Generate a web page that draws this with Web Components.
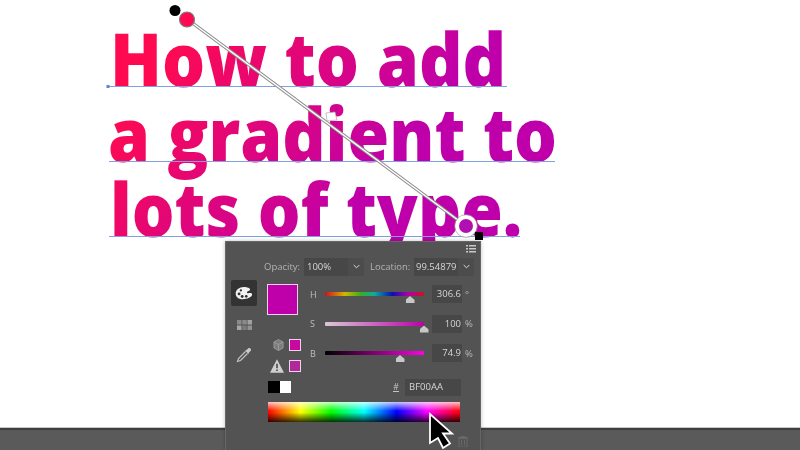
<!DOCTYPE html>
<html>
<head>
<meta charset="utf-8">
<style>
  html, body { margin: 0; height: 100%; background: #fff; overflow: hidden; }
  body { font-family: "Open Sans", "Liberation Sans", sans-serif; }
</style>
</head>
<body>
<art-board>
  <type-block>
    <type-line width="398" scale=".917" shift="0">How to add</type-line>
    <type-line width="446" scale=".912" shift="-2">a gradient to</type-line>
    <type-line width="411" scale=".909" shift="0">lots of type.</type-line>
  </type-block>
  <grad-handle slot="over"></grad-handle>
  <color-panel slot="over"></color-panel>
  <mouse-arrow slot="over"></mouse-arrow>
</art-board>

<script>
customElements.define(
  "art-board",
  class extends HTMLElement {
    constructor() {
      super();
      const shadowRoot = this.attachShadow({ mode: "open" });
      shadowRoot.innerHTML = `
<style>
  :host {
    display: flex;
    flex-direction: column;
    position: relative;
    width: 800px;
    height: 450px;
    overflow: hidden;
  }
  .page { flex: 1; }
  .bar {
    height: 20px;
    background: #5b5a5b;
    border-top: 2px solid #3f3f3f;
    box-shadow: 0 -1px 0 #c8c8c8;
  }
</style>
<div class="page"><slot></slot></div>
<div class="bar"></div>
<slot name="over"></slot>
`;
    }
  }
);

customElements.define(
  "type-block",
  class extends HTMLElement {
    constructor() {
      super();
      const shadowRoot = this.attachShadow({ mode: "open" });
      shadowRoot.innerHTML = `
<style>
  :host {
    display: flex;
    flex-direction: column;
    padding: 21px 0 0 110px;
    font-size: 74px;
    font-weight: 800;
    line-height: 75px;
  }
</style>
<slot></slot>
`;
    }
  }
);

// each line paints the same gradient, so shift it back by the line's place.
// the ink is squeezed in x, so the gradient box is stretched to make up for it
customElements.define(
  "type-line",
  class extends HTMLElement {
    constructor() {
      super();
      const shadowRoot = this.attachShadow({ mode: "open" });
      shadowRoot.innerHTML = `
<style>
  :host {
    display: block;
    position: relative;
    height: 75px;
  }
  .ink {
    display: block;
    white-space: nowrap;
    width: 540px;
    height: 95px;
    color: transparent;
    background-image: linear-gradient(129.9deg, #ff0a50 17.7%, #bf00aa 45%);
    background-repeat: no-repeat;
    -webkit-background-clip: text;
    background-clip: text;
    transform-origin: 0 0;
  }
  .rule {
    position: absolute;
    left: -1px;
    top: 65px;
    height: 1px;
    background: #829fe0;
  }
</style>
<span class="ink"><slot></slot></span>
<div class="rule"></div>
`;
    }

    connectedCallback() {
      const index = [...this.parentNode.children].indexOf(this);
      const scale = parseFloat(this.getAttribute("scale"));
      const shift = parseFloat(this.getAttribute("shift"));
      const ink = this.shadowRoot.querySelector(".ink");
      ink.style.transform = `translateX(${shift}px) scaleX(${scale})`;
      ink.style.backgroundSize = `${800 / scale}px 450px`;
      ink.style.backgroundPosition = `${-(110 + shift) / scale}px ${-21 - index * 75}px`;
      this.shadowRoot.querySelector(".rule").style.width =
        this.getAttribute("width") + "px";
    }
  }
);

customElements.define(
  "grad-handle",
  class extends HTMLElement {
    constructor() {
      super();
      const shadowRoot = this.attachShadow({ mode: "open" });
      shadowRoot.innerHTML = `
<style>
  :host {
    position: absolute;
    left: 0;
    top: 0;
    display: block;
  }
</style>
<svg width="800" height="450" viewBox="0 0 800 450">
  <path d="M187 19 466 226" stroke="#8c8c8c" stroke-width="3.4"/>
  <path d="M187 19 466 226" stroke="#fff" stroke-width="1.4"/>
  <rect x="106.500" y="85" width="3" height="3" fill="#5b86dc"/>
  <circle cx="175" cy="10.500" r="5.500" fill="#000"/>
  <circle cx="187" cy="19.500" r="7.500" fill="#ff0a50" stroke="#7c7c7c" stroke-width="1.200"/>
  <path d="M326 113 335 112 337 120 327 121Z" fill="#fff" stroke="#aaa" stroke-width=".7"/>
  <circle cx="466" cy="226" r="9" fill="#b010b0" stroke="#fff" stroke-width="4"/>
  <circle cx="466" cy="226" r="11.400" fill="none" stroke="#9a9a9a" stroke-width=".7"/>
  <rect x="475" y="232" width="8" height="8" fill="#000"/>
</svg>
`;
    }
  }
);

customElements.define(
  "hsb-row",
  class extends HTMLElement {
    constructor() {
      super();
      const shadowRoot = this.attachShadow({ mode: "open" });
      shadowRoot.innerHTML = `
<style>
  :host {
    display: grid;
    grid-template-columns: 14px 99px 38px auto;
    align-items: center;
    height: 18px;
    color: #d6d6d6;
  }
  .name { color: #bdbdbd; font-size: 9px; margin-left: -1px; }
  .track {
    position: relative;
    height: 4px;
    background: var(--track);
    border-radius: 1px;
  }
  .thumb {
    position: absolute;
    top: 4px;
    width: 9px;
    height: 7px;
    margin-left: -4.500px;
    background: #c8c8c8;
    clip-path: polygon(50% 0, 85% 40%, 100% 55%, 100% 100%, 0 100%, 0 55%, 15% 40%);
  }
  .value {
    box-sizing: border-box;
    width: 30px;
    height: 18px;
    margin-left: 8px;
    background: #474747;
    text-align: right;
    padding-right: 1px;
    line-height: 17px;
  }
  .unit { margin-left: 3px; color: #b9b9b9; }
</style>
<span class="name"></span>
<div class="track"><div class="thumb"></div></div>
<span class="value"></span>
<span class="unit"></span>
`;
    }

    connectedCallback() {
      const root = this.shadowRoot;
      root.querySelector(".name").textContent = this.getAttribute("name");
      root.querySelector(".value").textContent = this.getAttribute("value");
      root.querySelector(".unit").textContent = this.getAttribute("unit");
      root.querySelector(".track").style.setProperty("--track", this.getAttribute("track"));
      root.querySelector(".thumb").style.left = this.getAttribute("pos") + "px";
    }
  }
);

customElements.define(
  "color-panel",
  class extends HTMLElement {
    constructor() {
      super();
      const shadowRoot = this.attachShadow({ mode: "open" });
      shadowRoot.innerHTML = `
<style>
  :host {
    position: absolute;
    left: 225px;
    top: 241px;
    width: 256px;
    height: 209px;
    box-sizing: border-box;
    display: flex;
    flex-direction: column;
    background: #535353;
    border: 1px solid #666;
    border-bottom: 0;
    box-shadow: 0 0 4px #00000040;
    font-size: 9.500px;
    color: #d6d6d6;
    filter: blur(.3px);
  }
  .menu { display: flex; justify-content: flex-end; padding: 3px 4px 0 0; height: 10px; }
  .top {
    display: flex;
    align-items: center;
    height: 19px;
    margin-top: 2px;
    padding-left: 38px;
  }
  .top label { color: #b4b4b4; }
  .top .opacity-label { width: 36px; white-space: nowrap; }
  .top .location-label { width: 40px; margin-left: 6px; white-space: nowrap; }
  .field {
    display: flex;
    height: 18px;
    line-height: 17px;
    margin-left: 4px;
    box-sizing: border-box;
    white-space: nowrap;
  }
  .field span {
    display: block;
    box-sizing: border-box;
    padding-left: 3px;
    background: #474747;
    width: 44px;
  }
  .location span { padding-left: 2px; }
  .arrow {
    flex: none;
    width: 16px;
    height: 18px;
    background: #4c4c4c;
    display: flex;
    align-items: center;
    justify-content: center;
  }
  .body {
    flex: 1;
    display: flex;
    padding: 4px 0 0 5px;
  }
  .tools {
    width: 37px;
    flex: none;
    display: flex;
    flex-direction: column;
    align-items: flex-start;
  }
  .tool {
    width: 26px;
    height: 26px;
    display: flex;
    align-items: center;
    justify-content: center;
    border-radius: 2px;
  }
  .tool.on { background: #333; }
  .tool.grid { margin-top: 6px; }
  .tool.drop { margin-top: 4px; }
  .main { flex: 1; display: flex; flex-direction: column; }
  .upper { display: flex; height: 98px; }
  .side { width: 43px; flex: none; display: flex; flex-direction: column; }
  .big {
    width: 29px;
    height: 29px;
    margin: 4px 0 0 -1px;
    background: #bf00aa;
    border: 1px solid #ecd4e8;
  }
  .warn-row { display: flex; align-items: center; justify-content: flex-end; height: 21px; gap: 5px; width: 33px; }
  .warn-row svg { flex: none; }
  .warn-row.first { margin-top: 19px; }
  .mini {
    flex: none;
    width: 10px;
    height: 10px;
    border: 1px solid #ecd4e8;
    background: #c8089f;
  }
  .mini.web { background: #b0289a; }
  .rows {
    flex: 1;
    display: flex;
    flex-direction: column;
    gap: 11.500px;
    margin-top: 5px;
  }
  .hexline {
    display: flex;
    align-items: center;
    height: 18px;
  }
  .bw { display: flex; width: 23px; height: 12px; }
  .bw i { flex: 1; background: #000; }
  .bw i + i { background: #fff; }
  .hash { margin-left: 102px; width: 6px; color: #c4c4c4; border-bottom: 1px solid #c4c4c4; line-height: 9px; font-size: 8.500px; text-align: center; }
  .hex {
    margin-left: 6px;
    width: 56px;
    height: 17px;
    background: #474747;
    line-height: 16px;
    padding-left: 4px;
    box-sizing: border-box;
  }
  .spectrum {
    position: relative;
    width: 192px;
    height: 20px;
    margin-top: 6px;
    background: linear-gradient(90deg, #f00, #ff0 17%, #0f0 33%, #0ff 50%, #00f 67%, #f0f 83%, #f00);
  }
  .spectrum::after {
    content: "";
    position: absolute;
    inset: 0;
    background: linear-gradient(#ffffffc4 0%, #fff0 45%, #0000 52%, #000c 100%);
  }
  .trash { position: absolute; right: 12px; bottom: 3px; }
</style>
<div class="menu">
  <svg width="10" height="8" viewBox="0 0 10 8" fill="#c8c8c8"><path d="M0 0h2v1.500H0zM3 0h7v1.500H3zM0 3h2v1.500H0zM3 3h7v1.500H3zM0 6h2v1.500H0zM3 6h7v1.500H3z"/></svg>
</div>
<div class="top">
  <label class="opacity-label">Opacity:</label>
  <div class="field opacity"><span>100%</span><div class="arrow"><svg width="7" height="5" viewBox="0 0 7 5"><path d="M.7 1 3.500 3.800 6.300 1" fill="none" stroke="#ddd" stroke-width="1"/></svg></div></div>
  <label class="location-label">Location:</label>
  <div class="field location"><span>99.54879</span><div class="arrow"><svg width="7" height="5" viewBox="0 0 7 5"><path d="M.7 1 3.500 3.800 6.300 1" fill="none" stroke="#ddd" stroke-width="1"/></svg></div></div>
</div>
<div class="body">
  <div class="tools">
    <div class="tool on">
      <svg width="18" height="14" viewBox="0 0 20 16" preserveAspectRatio="none"><path d="M10 1C4.500 1 .5 4.500.8 9c.2 3.500 3.200 6 7.700 6 5 0 10-2.200 10.500-5 .3-1.800-2-2-4-1.800-1.500.1-2.300-.6-1.500-1.700.9-1.100 3.500-1 3.300-2.800C16.600 2.200 13.500 1 10 1Z" fill="#f2f2f2"/><g fill="#333"><circle cx="4.500" cy="9" r="1.600"/><circle cx="8" cy="12" r="1.600"/><circle cx="12.500" cy="11.800" r="1.500"/><circle cx="6.500" cy="5" r="1.300"/></g></svg>
    </div>
    <div class="tool grid">
      <svg width="15" height="10" viewBox="0 0 15 10">
        <rect width="4.500" height="4.500" fill="#8a8a8a"/><rect x="5.250" width="4.500" height="4.500" fill="#8a8a8a"/><rect x="10.500" width="4.500" height="4.500" fill="#a2a2a2"/>
        <rect y="5.500" width="4.500" height="4.500" fill="#a6a6a6"/><rect x="5.250" y="5.500" width="4.500" height="4.500" fill="#7c7c7c"/><rect x="10.500" y="5.500" width="4.500" height="4.500" fill="#929292"/>
      </svg>
    </div>
    <div class="tool drop">
      <svg width="16" height="16" viewBox="0 0 16 16"><path d="M9.500 4.500 2.500 11.500 1.500 14.500 4.500 13.500 11.500 6.500" fill="none" stroke="#c8c8c8" stroke-width="1.100"/><path d="M9 3.500 12.500 7 13 5.500 15 3.500C15.600 2 14 .5 12.500 1L10.500 3Z" fill="#c8c8c8"/></svg>
    </div>
  </div>
  <div class="main">
    <div class="upper">
      <div class="side">
        <div class="big"></div>
        <div class="warn-row first">
          <svg width="11" height="12" viewBox="0 0 12 12" preserveAspectRatio="none"><path d="M6 .5 11 3v6L6 11.500 1 9V3Z" fill="#7d7d7d" stroke="#a2a2a2" stroke-width=".8"/><path d="M1 3 6 5.500 11 3M6 5.500V11.500" fill="none" stroke="#a2a2a2" stroke-width=".8"/></svg>
          <div class="mini"></div>
        </div>
        <div class="warn-row">
          <svg width="14" height="14" viewBox="0 0 12 12"><path d="M6 .3 12 11.700H0Z" fill="#cfcfcf"/><path d="M5.400 4h1.200v4H5.400zM5.400 9h1.200v1.300H5.400z" fill="#333"/></svg>
          <div class="mini web"></div>
        </div>
      </div>
      <div class="rows">
        <hsb-row name="H" value="306.6" unit="°" pos="85" track="linear-gradient(90deg,#c8141e,#d8b400 20%,#38b018 36%,#10a8a0 50%,#0a10b0 68%,#b000a8 84%,#c8141e)"></hsb-row>
        <hsb-row name="S" value="100" unit="%" pos="99" track="linear-gradient(90deg,#d9c8d6,#bf00aa)"></hsb-row>
        <hsb-row name="B" value="74.9" unit="%" pos="75" track="linear-gradient(90deg,#000,#ff00e3)"></hsb-row>
      </div>
    </div>
    <div class="hexline">
      <div class="bw"><i></i><i></i></div>
      <span class="hash">#</span>
      <div class="hex">BF00AA</div>
    </div>
    <div class="spectrum"></div>
  </div>
</div>
<svg class="trash" width="10" height="11" viewBox="0 0 10 11"><path d="M0 1.500h10M3 1.500V.5h4v1M1 2.500h8V11H1ZM3.500 4v5M6.500 4v5" fill="none" stroke="#686868" stroke-width="1"/></svg>
`;
    }
  }
);

customElements.define(
  "mouse-arrow",
  class extends HTMLElement {
    constructor() {
      super();
      const shadowRoot = this.attachShadow({ mode: "open" });
      shadowRoot.innerHTML = `
<style>
  :host { position: absolute; left: 427px; top: 412px; display: block; }
</style>
<svg width="28" height="38" viewBox="0 0 28 38"><path d="M3 2V31L11 26 16 36 23 31.500 16 21.500H25Z" fill="#000" stroke="#fff" stroke-width="1.800"/></svg>
`;
    }
  }
);
</script>
</body>
</html>
